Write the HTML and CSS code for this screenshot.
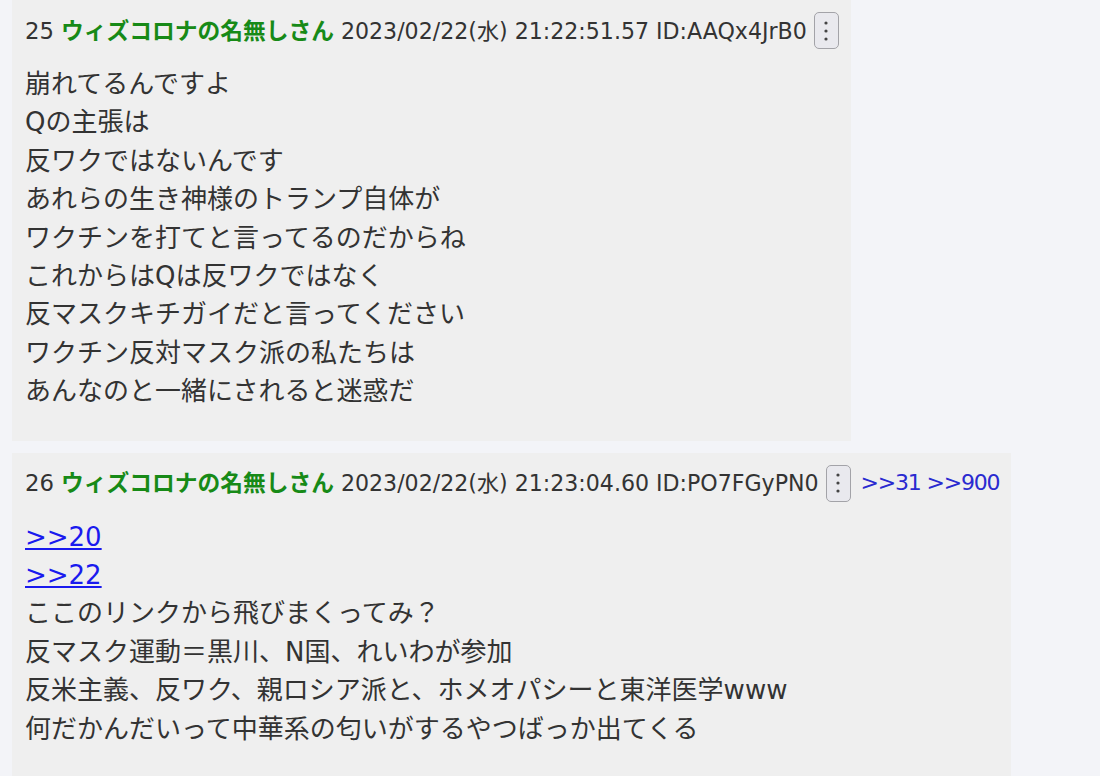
FILE: index.html
```html
<!DOCTYPE html>
<html lang="ja">
<head>
<meta charset="utf-8">
<title>thread</title>
<link rel="stylesheet" href="styles.css">
</head>
<body>
<div class="thread">
  <div class="post">
    <div class="meta">
      <span class="num">25</span>
      <span class="name">ウィズコロナの名無しさん</span>
      <span class="date">2023/02/22(水) 21:22:51.57</span>
      <span class="uid">ID:AAQx4JrB0</span>
      <button class="menu" type="button" aria-label="menu"><svg width="4" height="20" viewBox="0 0 4 20"><circle cx="2" cy="2" r="1.6"/><circle cx="2" cy="10" r="1.6"/><circle cx="2" cy="18" r="1.6"/></svg></button>
    </div>
    <div class="message">崩れてるんですよ<br>Qの主張は<br>反ワクではないんです<br>あれらの生き神様のトランプ自体が<br>ワクチンを打てと言ってるのだからね<br>これからはQは反ワクではなく<br>反マスクキチガイだと言ってください<br>ワクチン反対マスク派の私たちは<br>あんなのと一緒にされると迷惑だ</div>
  </div>
  <div class="post">
    <div class="meta">
      <span class="num">26</span>
      <span class="name">ウィズコロナの名無しさん</span>
      <span class="date">2023/02/22(水) 21:23:04.60</span>
      <span class="uid">ID:PO7FGyPN0</span>
      <button class="menu" type="button" aria-label="menu"><svg width="4" height="20" viewBox="0 0 4 20"><circle cx="2" cy="2" r="1.6"/><circle cx="2" cy="10" r="1.6"/><circle cx="2" cy="18" r="1.6"/></svg></button>
      <span class="replies"><a href="#">&gt;&gt;31</a> <a href="#">&gt;&gt;900</a></span>
    </div>
    <div class="message"><a class="anchor" href="#">&gt;&gt;20</a><br><a class="anchor" href="#">&gt;&gt;22</a><br>ここのリンクから飛びまくってみ？<br>反マスク運動＝黒川、N国、れいわが参加<br>反米主義、反ワク、親ロシア派と、ホメオパシーと東洋医学www<br>何だかんだいって中華系の匂いがするやつばっか出てくる</div>
  </div>
</div>
</body>
</html>
```

FILE: styles.css
```css
html, body {
  margin: 0;
  padding: 0;
}
body {
  background: #f3f4f8;
  font-family: "DejaVu Sans", "Noto Sans CJK JP", sans-serif;
  color: #333333;
}
.thread {
  display: flex;
  flex-direction: column;
  align-items: flex-start;
  gap: 12px;
  padding: 0 0 0 12px;
}
.post {
  background: #efefef;
  padding: 12px 12px 30px 13px;
}
.meta {
  display: flex;
  align-items: center;
  gap: 7px;
  font-size: 22.75px;
  line-height: 34px;
  white-space: nowrap;
}
.date,
.uid {
  font-size: 22.1px;
}
.name {
  color: #178a17;
  font-weight: bold;
}
.menu {
  width: 25px;
  height: 37px;
  padding: 0;
  margin: 0;
  border: 1px solid #a3a3a8;
  border-radius: 5px;
  background: #e9e9ee;
  display: flex;
  align-items: center;
  justify-content: center;
}
.menu svg {
  fill: #444;
}
.replies {
  margin-left: 3px;
  font-size: 22px;
  letter-spacing: -1.2px;
}
.replies a {
  color: #2a2ad0;
  text-decoration: none;
}
.message {
  margin-top: 16px;
  font-size: 26px;
  line-height: 38.4px;
}
.anchor {
  color: #1a1aee;
  text-decoration: underline;
}
```
